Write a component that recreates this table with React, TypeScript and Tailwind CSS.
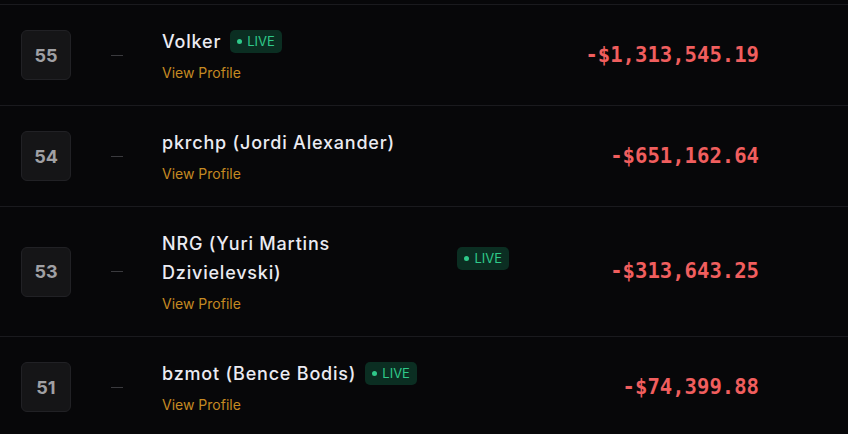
import React from 'react';

type Player = {
  rank: number;
  name: string;
  live: boolean;
  amount: string;
};

const players: Player[] = [
  { rank: 55, name: 'Volker', live: true, amount: '-$1,313,545.19' },
  { rank: 54, name: 'pkrchp (Jordi Alexander)', live: false, amount: '-$651,162.64' },
  { rank: 53, name: 'NRG (Yuri Martins Dzivielevski)', live: true, amount: '-$313,643.25' },
  { rank: 51, name: 'bzmot (Bence Bodis)', live: true, amount: '-$74,399.88' },
];

function LiveBadge(): JSX.Element {
  return (
    <span className='shrink-0 inline-flex items-center gap-[5px] h-[23px] px-[7px] rounded-[5px] bg-[#0b2e22] text-[#2fc98a] text-[13px] leading-none'>
      <span className='w-[5px] h-[5px] rounded-full bg-[#2fc98a]'></span>
      LIVE
    </span>
  )
}

function App(): JSX.Element {
  return (
    <div className="w-[848px] h-[434px] overflow-hidden bg-[#070709] font-['Inter',sans-serif]">
      <div className='h-[4px]'></div>
      {
        players.map((p) => {
          return (
            <div key={p.rank} className='flex items-center border-t border-[#1a1a1e] min-h-[101px] py-[22px]'>
              <div className='ml-[21px] w-[50px] h-[50px] shrink-0 flex items-center justify-center rounded-md bg-[#151517] border border-[#212125] text-[#a0a0a4] text-[18px] font-bold'>
                {p.rank}
              </div>
              <div className='ml-[40px] w-[12px] h-[1px] bg-[#3a3a3e] shrink-0'></div>
              <div className='ml-[39px] w-[347px]'>
                <div className='flex items-center gap-[9px]'>
                  <div className='min-w-0 text-[18px] leading-[29px] font-medium tracking-[0.8px] text-[#ebebf2]'>{p.name}</div>
                  {p.live ? <LiveBadge /> : null}
                </div>
                <div className='mt-[7px] text-[14px] leading-[20px] text-[#c58a22]'>View Profile</div>
              </div>
              <div className="w-[250px] text-right font-['DejaVu_Sans_Mono',monospace] font-bold text-[20.6px] text-[#f05e5e]">
                {p.amount}
              </div>
            </div>
          )
        })
      }
    </div>
  )
}

export default App
